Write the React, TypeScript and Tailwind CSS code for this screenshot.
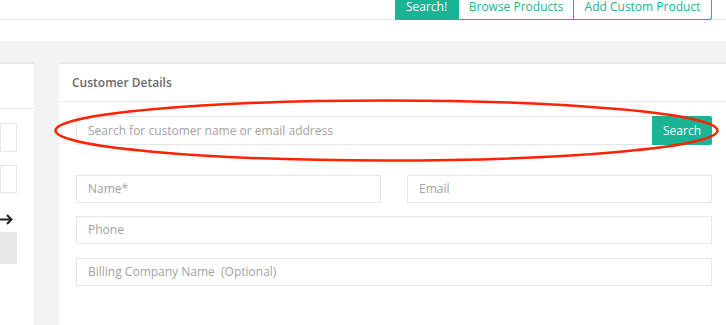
import React from "react";

export default function App() {
  const input =
    "h-[28px] border border-[#e5e6e7] bg-white flex items-center pl-[11px] text-[12px] text-[#a2a2a2]";
  return (
    <div
      className="relative w-[726px] h-[325px] overflow-hidden bg-white"
      style={{ fontFamily: '"Open Sans", "Noto Sans", sans-serif' }}
    >
      {/* top bar */}
      <div className="h-[20px] border-b border-[#e7eaec] flex justify-end">
        <div className="flex h-[20px] mr-[14px] text-[12px] leading-none">
          <div className="h-full w-[63px] bg-[#1ab394] text-white flex items-center justify-center pb-[7px]">
            Search!
          </div>
          <div className="h-full w-[115px] border-l border-b border-[#1ab394] text-[#1ab394] flex items-center justify-center pb-[6px]">
            Browse Products
          </div>
          <div className="h-full w-[139px] border-x border-b border-[#1ab394] rounded-br-[3px] text-[#1ab394] flex items-center justify-center pb-[6px]">
            Add Custom Product
          </div>
        </div>
      </div>
      <div className="h-[21px]" />
      {/* gray area */}
      <div className="bg-[#f3f3f4] pt-[21px] flex h-[284px]">
        {/* left panel */}
        <div className="w-[34px] shrink-0 bg-white border-t-2 border-[#e7eaec] flex flex-col">
          <div className="h-[45px] border-b border-[#e7eaec]" />
          <div className="mt-[14px] w-[17px] h-[29px] border border-[#e5e6e7]" />
          <div className="mt-[13px] w-[17px] h-[28px] border border-[#e5e6e7]" />
          <div className="mt-[19px] h-[20px] flex items-start pt-[2px]">
            <svg width="13" height="11" viewBox="0 0 13 11" fill="none">
              <path
                d="M0 5.5H11.5M7 1L11.5 5.5L7 10"
                stroke="#222"
                strokeWidth="2"
                strokeLinejoin="miter"
              />
            </svg>
          </div>
          <div className="w-[17px] h-[32px] bg-[#e6e6e6]" />
        </div>
        <div className="w-[25px] shrink-0" />
        {/* right panel */}
        <div className="flex-1 bg-white border-t-2 border-[#e7eaec] flex flex-col">
          <div className="h-[38px] border-b border-[#e7eaec] flex items-center pl-[13px] pt-[1px]">
            <span className="text-[12px] font-semibold text-[#676a6c]">Customer Details</span>
          </div>
          <div className="pl-[17px] pr-[14px] pt-[14px]">
            <div className="flex h-[29px]">
              <div className="flex-1 h-[29px] border border-r-0 border-[#e5e6e7] flex items-center pl-[11px] text-[12px] text-[#a2a2a2]">
                Search for customer name or email address
              </div>
              <div className="w-[60px] h-[29px] bg-[#1ab394] text-white text-[12px] flex items-center justify-center rounded-r-[2px]">
                Search
              </div>
            </div>
            <div className="grid grid-cols-2 gap-x-[26px] mt-[30px]">
              <div className={input}>Name*</div>
              <div className={input}>Email</div>
            </div>
            <div className={input + " mt-[13px]"}>Phone</div>
            <div className={input + " mt-[14px]"}>Billing Company Name&nbsp; (Optional)</div>
          </div>
        </div>
      </div>
      {/* annotation */}
      <svg
        className="absolute inset-0 pointer-events-none"
        width="726"
        height="325"
        viewBox="0 0 726 325"
      >
        <ellipse
          cx="386.5"
          cy="130.5"
          rx="331"
          ry="30"
          fill="none"
          stroke="#ff2200"
          strokeWidth="2.5"
        />
      </svg>
    </div>
  );
}
